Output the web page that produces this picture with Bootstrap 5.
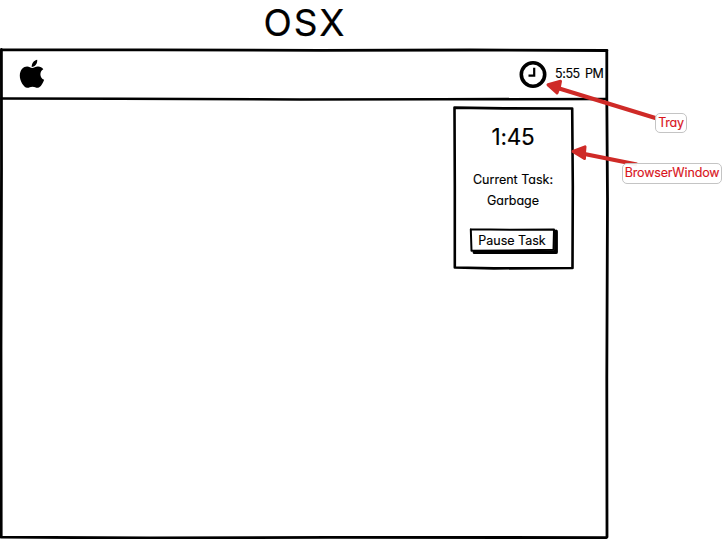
<!DOCTYPE html>
<html lang="en">
<head>
<meta charset="utf-8">
<meta name="viewport" content="width=device-width, initial-scale=1">
<title>OSX tray timer</title>
<link href="https://cdn.jsdelivr.net/npm/bootstrap@5.3.0/dist/css/bootstrap.min.css" rel="stylesheet">
<style>
body{font-family:"Inter","Lato",sans-serif;font-feature-settings:"cv11";font-size:12.5px;color:#000;background:#fff;width:722px;height:539px;overflow:hidden;-webkit-text-stroke:.15px currentColor}
.title-text{width:608px;height:48px;font-size:37px;line-height:45px;letter-spacing:2px;padding-left:2px;-webkit-text-stroke:.2px #000}
.desktop{width:608px;height:491px}
.menubar{height:51px;padding:0 5px 0 19px}
.sketch{left:0;top:0;width:100%;height:100%;overflow:visible;pointer-events:none}
.sketch path{fill:none;stroke:#000;stroke-linecap:round;stroke-linejoin:round}
.clock-text{width:48px;margin-left:8px;padding-top:1px;white-space:nowrap;letter-spacing:-.4px;word-spacing:2px}
.timer{width:120px;height:163px;margin-right:34px;margin-top:7px;padding-top:14px}
.timer-value{font-size:22.5px;line-height:34px;margin-bottom:15px;padding-right:2px;letter-spacing:-.2px}
.task-lines{line-height:21px;white-space:nowrap;padding-right:2px}
.pause{width:88px;height:26px;margin-top:17px;padding:1px 4px 1px 0;font-size:12.5px;line-height:24px;border:0;border-radius:0;white-space:nowrap}
.pause-label{position:relative}
.notes{left:0;top:0;width:722px;height:539px}
.note{position:absolute;height:20px;line-height:17px;border:1px solid #c4c4c4;border-radius:5px;background:rgba(255,255,255,.94);color:#d9161d;white-space:nowrap;text-align:center}
.note-tray{left:655px;top:113px;width:32px;letter-spacing:-.2px}
.note-window{left:622px;top:163px;width:100px;height:21px;letter-spacing:-.15px}
</style>
</head>
<body class="position-relative">
<h1 class="title-text text-center fw-normal m-0"><span>OSX</span></h1>
<main class="desktop position-relative">
  <svg class="sketch position-absolute" viewBox="0 0 608 491">
    <path stroke-width="2.8" d="M1.6 1.7L150 1.8L320 2.4L470 2L607 2.5M1.4 1.5L1.5 120L1 300L1.2 489.2L150 490L330 489.3L606.5 489.6M606.8 2.5L606.8 50L607.5 150L606.8 330L607 489"/>
    <path stroke-width="2.6" d="M1.5 50.5L120 50.7L300 51.5L440 51.3L606 51"/>
  </svg>
  <nav class="menubar d-flex align-items-center">
    <svg width="26" height="30" viewBox="0 0 26 30" aria-label="Apple"><path d="M12.7 8.1C12.5 4.1 15 1.4 18.2.7C18.6 4.3 16.5 7.4 12.7 8.1ZM13.2 9.1C15 8.7 16.6 7.4 19.1 7.5C21.2 7.6 23.1 8.5 24.3 10.2C20.2 12.6 20.5 18.7 25.1 20.8C24.1 24 21.7 28.5 18.9 28.8C16.8 29 16 27.7 13.5 27.7C11 27.7 10 29 8.2 28.8C4.5 28.5.7 21.2.8 16.4C.9 10.8 4.6 7.5 8.1 7.5C10.2 7.5 11.7 8.7 13.2 9.1Z"/></svg>
    <svg class="ms-auto" width="28" height="28" viewBox="0 0 28 28" fill="none" stroke="#000"><circle cx="14" cy="14.5" r="11.7" stroke-width="3.6"/><path d="M15.2 7.8V15.6H9.5" stroke-width="2.2"/></svg>
    <div class="clock-text"><span>5:55 PM</span></div>
  </nav>
  <section class="timer position-relative ms-auto text-center">
    <svg class="sketch position-absolute" viewBox="0 0 120 163">
      <path stroke-width="2.6" d="M.5 1.6L50 2.4L118.2 2.5L118.8 80L118.5 162L40 162.4L.8 161.5L.8 80L.5 1.6"/>
    </svg>
    <div class="timer-value"><span>1:45</span></div>
    <div class="task-lines"><div><span>Current Task:</span></div><div><span>Garbage</span></div></div>
    <button class="pause btn position-relative text-black" type="button">
      <svg class="sketch position-absolute" viewBox="0 0 88 26">
        <path stroke-width="3.8" stroke-linecap="butt" d="M4.5 24.2H86V3.5"/>
        <path stroke-width="2" d="M.8 1.2L40 1.8L84 1.4L83.5 21.8L40 22.5L1.5 22.7L.8 1.2"/>
      </svg>
      <span class="pause-label">Pause Task</span>
    </button>
  </section>
</main>
<aside class="notes position-absolute">
  <svg class="position-absolute" width="722" height="539" viewBox="0 0 722 539" fill="#cf2a27" stroke="#cf2a27" stroke-linejoin="round">
    <path d="M556 87.5L657 118.5" stroke-width="4.2"/><path d="M548 84.8L560.5 81.3L559.5 86.5L557 93Z" stroke-width="3"/>
    <path d="M582 153.5L637 164.5" stroke-width="4.2"/><path d="M573 151.5L585 146.9L584.5 153L584.5 158.5Z" stroke-width="3"/>
  </svg>
  <div class="note note-tray"><span>Tray</span></div>
  <div class="note note-window"><span>BrowserWindow</span></div>
</aside>
<script src="https://cdn.jsdelivr.net/npm/bootstrap@5.3.0/dist/js/bootstrap.bundle.min.js"></script>
</body>
</html>
